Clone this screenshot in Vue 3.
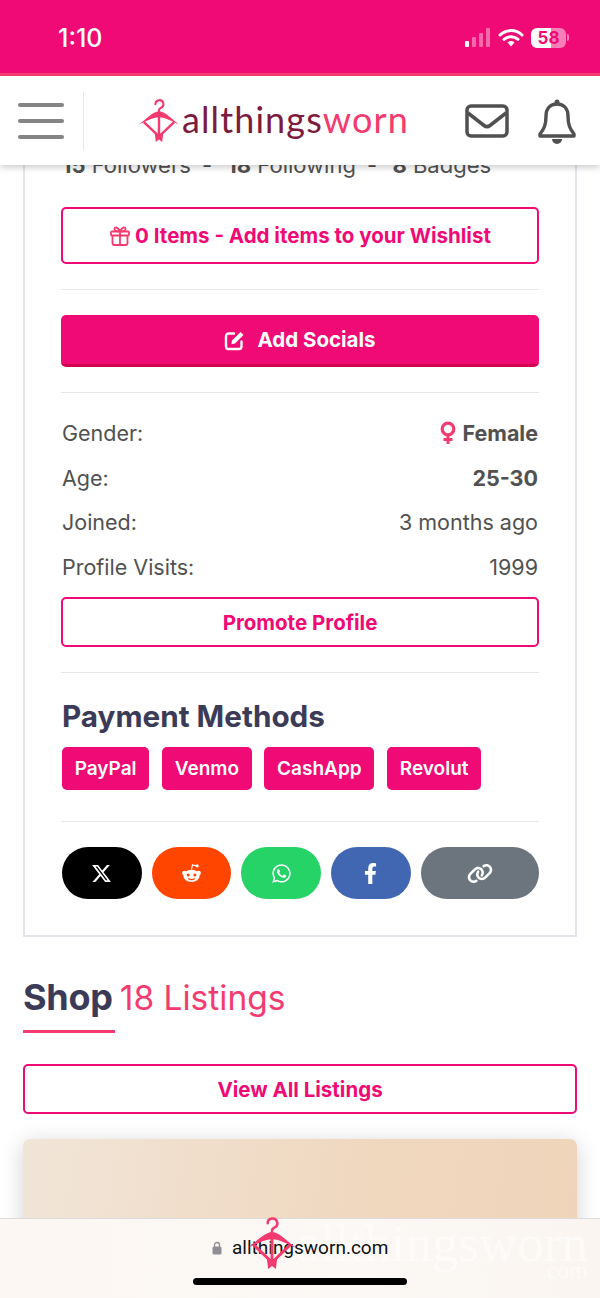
<template>
  <div class="page">
    <svg class="defs" width="0" height="0">
      <symbol id="hanger" viewBox="0 0 50 54">
        <path d="M20.500 6.500a5 5 0 1 1 7 4.500c-1.800.8-2.500 2-2.500 3.500V18" fill="none" stroke="currentColor" stroke-width="2.600" stroke-linecap="round" />
        <path d="M0 32C8 26 17 16 25 15.500 33 16 42 26 50 32 41 28 33 23 25 23 17 23 9 28 0 32z" fill="currentColor" />
        <path d="M6 29l19 18 19-18M25 18v28" fill="none" stroke="currentColor" stroke-width="3" />
        <path d="M19.500 42l5.500 4 5.500-4-1.500 12-4-3-4 3z" fill="currentColor" />
      </symbol>
    </svg>

    <header class="top">
      <div class="status">
        <span class="time">1:10</span>
        <div class="status-icons">
          <div class="signal">
            <i class="on"></i><i></i><i></i><i></i>
          </div>
          <svg class="wifi" viewBox="0 0 26 19" width="26" height="19">
            <path d="M2 7a16 16 0 0 1 22 0M6 11.300a10.500 10.500 0 0 1 14 0" fill="none" stroke="#fff" stroke-width="3" stroke-linecap="round" />
            <path d="M9.500 14.500a5 5 0 0 1 7 0L13 18.500z" fill="#fff" />
          </svg>
          <div class="battery"><span>58</span></div>
          <i class="battery-tip"></i>
        </div>
      </div>
      <nav class="nav">
        <div class="burger"><i></i><i></i><i></i></div>
        <div class="nav-divider"></div>
        <div class="logo">
          <svg class="logo-mark" width="40" height="43"><use href="#hanger" /></svg>
          <span class="logo-text"><span class="dark">allthings</span>worn</span>
        </div>
        <div class="nav-icons">
          <svg viewBox="0 0 44 34" width="44" height="34">
            <rect x="2" y="2" width="40" height="30" rx="4" fill="none" stroke="#505050" stroke-width="3.500" />
            <path d="M3 9l16 12.500c2 1.500 4 1.500 6 0L41 9" fill="none" stroke="#505050" stroke-width="3.500" />
          </svg>
          <svg viewBox="0 0 38 46" width="38" height="46">
            <path d="M19 6c-7 0-11 5-11 12 0 9-2 13-6 18v2h34v-2c-4-5-6-9-6-18 0-7-4-12-11-12z" fill="none" stroke="#505050" stroke-width="3.400" stroke-linejoin="round" />
            <circle cx="19" cy="4" r="2.500" fill="#505050" />
            <path d="M14 41h10a5 5 0 0 1-10 0z" fill="#505050" />
          </svg>
        </div>
      </nav>
    </header>

    <main class="main">
      <section class="card">
        <p class="stats">
          <b>15</b> Followers <span class="dash">-</span> <b>18</b> Following <span class="dash">-</span> <b>8</b> Badges
        </p>

        <button class="btn outline wish">
          <svg viewBox="0 0 22 22" width="22" height="22" fill="none" stroke="#f43a6e" stroke-width="1.800">
            <rect x="2" y="6.500" width="18" height="4" rx="1" />
            <path d="M3.500 10.500V18a2 2 0 0 0 2 2h11a2 2 0 0 0 2-2v-7.500M11 6.500V20M11 6.500C9 2 6 1.500 5.500 3.500S8 6.500 11 6.500zM11 6.500c2-4.500 5-5 5.500-3S14 6.500 11 6.500z" />
          </svg>
          0 Items - Add items to your Wishlist
        </button>
        <hr />
        <button class="btn solid">
          <svg viewBox="0 0 22 22" width="22" height="22">
            <path d="M17.500 12.500V17.500a2.500 2.500 0 0 1-2.500 2.500H4.500A2.500 2.500 0 0 1 2 17.500V7A2.500 2.500 0 0 1 4.500 4.500H10" fill="none" stroke="#fff" stroke-width="2.400" stroke-linecap="round" />
            <path d="M8 11.500L16.500 3l3 3-8.500 8.500-3.700.700z" fill="#fff" />
          </svg>
          Add Socials
        </button>
        <hr />

        <div class="facts">
          <div class="fact">
            <span>Gender:</span>
            <strong class="gender">
              <svg viewBox="0 0 16 24" width="16" height="24">
                <circle cx="8" cy="8" r="5.800" fill="none" stroke="#f43a6e" stroke-width="3.200" />
                <path d="M8 14v9M3.500 18.500h9" stroke="#f43a6e" stroke-width="3" fill="none" />
              </svg>
              Female
            </strong>
          </div>
          <div class="fact"><span>Age:</span><strong>25-30</strong></div>
          <div class="fact"><span>Joined:</span><span>3 months ago</span></div>
          <div class="fact"><span>Profile Visits:</span><span>1999</span></div>
        </div>

        <button class="btn outline promote">Promote Profile</button>
        <hr />

        <h2 class="pay-title">Payment Methods</h2>
        <div class="tags">
          <span v-for="m in methods" :key="m" class="tag">{{ m }}</span>
        </div>
        <hr class="tags-line" />

        <div class="share">
          <a class="x">
            <svg viewBox="0 0 512 512" width="21" height="21">
              <path fill="#fff" d="M389.2 48h70.600L305.600 224.200 487 464H345L233.700 318.600 106.500 464H35.800L200.700 275.500 26.800 48H172.400L272.900 180.900 389.200 48zM364.400 421.800h39.100L151.100 88h-42L364.400 421.800z" />
            </svg>
          </a>
          <a class="reddit">
            <svg viewBox="0 0 22 22" width="21" height="21">
              <circle cx="3.500" cy="10.500" r="2.300" fill="#fff" />
              <circle cx="18.500" cy="10.500" r="2.300" fill="#fff" />
              <ellipse cx="11" cy="13.500" rx="8.500" ry="6.500" fill="#fff" />
              <path d="M11 7l1-5 4 1" fill="none" stroke="#fff" stroke-width="1.200" />
              <circle cx="17" cy="3" r="1.600" fill="#fff" />
              <circle cx="7.500" cy="12.500" r="1.600" fill="#ff4500" />
              <circle cx="14.500" cy="12.500" r="1.600" fill="#ff4500" />
              <path d="M7.500 16.200c2 1.400 5 1.400 7 0" fill="none" stroke="#ff4500" stroke-width="1.200" />
            </svg>
          </a>
          <a class="whatsapp">
            <svg viewBox="0 0 448 512" width="19" height="21">
              <path fill="#fff" d="M380.900 97.100C339 55.100 283.200 32 223.900 32c-122.400 0-222 99.600-222 222 0 39.100 10.200 77.300 29.600 111L0 480l117.700-30.900c32.400 17.700 68.900 27 106.100 27h.1c122.300 0 224.100-99.600 224.100-222 0-59.300-25.200-115-67.100-157zm-157 341.600c-33.200 0-65.700-8.900-94-25.700l-6.700-4-69.800 18.300L72 359.200l-4.400-7c-18.500-29.400-28.200-63.300-28.200-98.200 0-101.700 82.800-184.500 184.600-184.500 49.300 0 95.600 19.200 130.400 54.100 34.800 34.900 56.200 81.200 56.100 130.500 0 101.800-84.900 184.600-186.600 184.600zm101.200-138.200c-5.500-2.800-32.800-16.200-37.900-18-5.100-1.900-8.800-2.800-12.500 2.800-3.700 5.600-14.300 18-17.600 21.800-3.200 3.700-6.500 4.200-12 1.400-32.600-16.300-54-29.100-75.500-66-5.700-9.800 5.700-9.100 16.300-30.300 1.800-3.700.9-6.900-.5-9.700-1.400-2.800-12.500-30.100-17.100-41.200-4.500-10.800-9.100-9.300-12.500-9.500-3.200-.2-6.900-.2-10.600-.2-3.700 0-9.700 1.400-14.800 6.900-5.100 5.600-19.400 19-19.400 46.300 0 27.300 19.900 53.700 22.600 57.400 2.800 3.700 39.100 59.700 94.800 83.800 35.200 15.200 49 16.500 66.600 13.900 10.700-1.600 32.800-13.400 37.400-26.400 4.600-13 4.600-24.100 3.200-26.400-1.300-2.500-5-3.900-10.500-6.600z" />
            </svg>
          </a>
          <a class="facebook">
            <svg viewBox="0 0 320 512" width="13" height="21">
              <path fill="#fff" d="M279.140 288l14.220-92.660h-88.910v-60.130c0-25.350 12.420-50.060 52.240-50.060h40.420V6.260S260.430 0 225.360 0c-73.220 0-121.080 44.380-121.080 124.720v70.620H22.890V288h81.390v224h100.170V288z" />
            </svg>
          </a>
          <a class="copy">
            <svg viewBox="0 0 640 512" width="26" height="21">
              <path fill="#fff" d="M579.800 267.700c56.500-56.500 56.500-148 0-204.500c-50-50-128.800-56.500-186.300-15.400l-1.600 1.100c-14.400 10.300-17.700 30.300-7.400 44.600s30.300 17.700 44.600 7.400l1.600-1.100c32.100-22.900 76-19.300 103.800 8.600c31.500 31.500 31.500 82.500 0 114L422.300 334.800c-31.500 31.500-82.500 31.500-114 0c-27.900-27.900-31.500-71.800-8.600-103.800l1.100-1.600c10.300-14.400 6.900-34.400-7.400-44.600s-34.400-6.900-44.600 7.400l-1.100 1.600C206.500 251.200 213 330 263 380c56.500 56.500 148 56.500 204.500 0L579.800 267.700zM60.200 244.300c-56.500 56.500-56.500 148 0 204.500c50 50 128.800 56.500 186.300 15.400l1.600-1.100c14.400-10.300 17.700-30.300 7.400-44.600s-30.300-17.700-44.600-7.400l-1.600 1.100c-32.100 22.900-76 19.300-103.800-8.600C74 372 74 321 105.500 289.500L217.700 177.200c31.500-31.500 82.500-31.500 114 0c27.900 27.900 31.500 71.800 8.600 103.900l-1.100 1.600c-10.300 14.400-6.900 34.400 7.400 44.600s34.400 6.900 44.600-7.400l1.100-1.600C433.500 260.800 427 182 377 132c-56.500-56.500-148-56.500-204.500 0L60.200 244.300z" />
            </svg>
          </a>
        </div>
      </section>

      <section class="shop">
        <h2 class="shop-title">Shop <span>18 Listings</span></h2>
        <div class="shop-rule"></div>
        <button class="btn outline all">View All Listings</button>
        <div class="listing"></div>
      </section>
    </main>

    <footer class="browser">
      <span class="ghost">allthingsworn<small>.com</small></span>
      <div class="url">
        <svg viewBox="0 0 10 14" width="10" height="14">
          <path d="M2.500 6V4a2.500 2.500 0 0 1 5 0v2" fill="none" stroke="#8e8e93" stroke-width="1.300" />
          <rect x="0.500" y="5.500" width="9" height="8" rx="1.500" fill="#8e8e93" />
        </svg>
        <span>allthingsworn.com</span>
      </div>
      <svg class="float-mark" width="48" height="52"><use href="#hanger" /></svg>
      <div class="home"></div>
    </footer>
  </div>
</template>

<script setup>
const methods = ['PayPal', 'Venmo', 'CashApp', 'Revolut']
</script>

<style>
html,
body {
  margin: 0;
  background: #fff;
}
</style>

<style scoped>
.page {
  position: relative;
  width: 600px;
  height: 1298px;
  overflow: hidden;
  background: #fff;
  font-family: Inter, "Liberation Sans", sans-serif;
  color: #515151;
}

.defs {
  position: absolute;
}

/* header sits over the scrolled page */
.top {
  position: absolute;
  top: 0;
  left: 0;
  right: 0;
  z-index: 5;
  box-shadow: 0 2px 7px rgba(0, 0, 0, 0.22);
}

.status {
  height: 73px;
  background: #f00a75;
  border-bottom: 3px solid #f43a6e;
  display: flex;
  align-items: center;
  justify-content: space-between;
  padding: 0 31px 0 58px;
}

.time {
  color: #fff;
  font-size: 25px;
  font-weight: 500;
  position: relative;
  top: 1px;
}

.status-icons {
  display: flex;
  align-items: center;
  gap: 7px;
  position: relative;
  top: 1px;
}

.signal {
  display: flex;
  align-items: flex-end;
  gap: 3px;
  height: 19px;
  margin-right: 1px;
}

.signal i {
  width: 4px;
  background: #f769ab;
  border-radius: 1px;
}

.signal i:nth-child(1) {
  height: 6px;
  background: #fff;
}

.signal i:nth-child(2) {
  height: 10px;
}

.signal i:nth-child(3) {
  height: 14px;
}

.signal i:nth-child(4) {
  height: 19px;
}

.battery {
  width: 35px;
  height: 20px;
  border-radius: 6px;
  background: linear-gradient(90deg, #fff 58%, #f87fb8 58%);
  color: #f00a75;
  font-size: 17px;
  font-weight: 700;
  line-height: 20px;
  text-align: center;
}

.battery-tip {
  width: 2px;
  height: 7px;
  background: #f87fb8;
  border-radius: 0 2px 2px 0;
  margin-left: -6px;
}

.nav {
  height: 89px;
  background: #fff;
  display: flex;
  align-items: center;
  padding: 0 24px 0 18px;
}

.burger {
  width: 46px;
  height: 36px;
  display: flex;
  flex-direction: column;
  justify-content: space-between;
  flex: none;
}

.burger i {
  height: 4px;
  border-radius: 2px;
  background: #858585;
}

.nav-divider {
  width: 1px;
  height: 58px;
  margin-left: 19px;
  background: #e6e6e6;
  flex: none;
}

.logo {
  display: flex;
  align-items: center;
  margin-left: 55px;
  gap: 3px;
}

.logo-mark {
  color: #f43a6e;
  flex: none;
}

.logo-text {
  font-family: Lato, sans-serif;
  font-size: 36px;
  font-weight: 400;
  letter-spacing: 1.1px;
  color: #f43a6e;
  line-height: 40px;
  position: relative;
  top: -2px;
}

.dark {
  color: #7d1b3e;
}

.nav-icons {
  margin-left: auto;
  display: flex;
  align-items: center;
  gap: 29px;
}

.main {
  padding-top: 152px;
}

.card {
  margin: 0 23px;
  padding: 0 36px 36px;
  border: 2px solid #e4e4ea;
  border-top: 0;
}

.stats {
  margin: -2px 0 0 1px;
  font-size: 22px;
  line-height: 30px;
  white-space: nowrap;
}

.stats b {
  font-weight: 700;
}

.dash {
  margin: 0 9px 0 5px;
}

.btn {
  display: flex;
  align-items: center;
  justify-content: center;
  width: 100%;
  box-sizing: border-box;
  font-family: inherit;
  font-size: 20.500px;
  font-weight: 700;
  border-radius: 5px;
  padding: 0;
}

.outline {
  height: 50px;
  background: #fff;
  color: #f00a75;
  border: 2px solid #f00a75;
}

.wish {
  height: 57px;
  margin-top: 27px;
  gap: 4px;
}

.solid {
  height: 52px;
  background: #f00a75;
  color: #fff;
  border: 0;
  border-bottom: 3px solid #d2004f;
  gap: 11px;
}

hr {
  border: 0;
  height: 1px;
  background: #e8e8ec;
  margin: 25px 0;
}

.facts {
  margin-top: -7px;
  padding: 0 1px;
}

.fact {
  height: 44.500px;
  display: flex;
  align-items: center;
  justify-content: space-between;
  font-size: 21.500px;
}

.fact strong {
  font-weight: 700;
}

.gender {
  display: flex;
  align-items: center;
  gap: 6px;
}

.promote {
  margin-top: 8px;
}

.pay-title {
  margin: 0 0 0 1px;
  font-size: 29.700px;
  line-height: 36px;
  font-weight: 700;
  color: #3b3b58;
}

.tags {
  display: flex;
  gap: 12.750px;
  margin: 13px 0 0 1px;
}

.tag {
  height: 43px;
  line-height: 43px;
  padding: 0 12.700px;
  border-radius: 5px;
  background: #f00a75;
  color: #fff;
  font-size: 19px;
  font-weight: 600;
}

.tags-line {
  margin-top: 31px;
}

.share {
  display: flex;
  gap: 10px;
  padding-left: 1px;
}

.share a {
  flex: 80 0 0;
  height: 52px;
  border-radius: 26px;
  display: flex;
  align-items: center;
  justify-content: center;
}

.share .copy {
  flex-grow: 119;
}

.x {
  background: #000;
}

.reddit {
  background: #ff4500;
}

.whatsapp {
  background: #25d366;
}

.facebook {
  background: #4267b2;
}

.copy {
  background: #6c757d;
}

.shop {
  margin: 35px 23px 0;
}

.shop-title {
  margin: 0;
  font-size: 36px;
  line-height: 50px;
  font-weight: 700;
  letter-spacing: -0.3px;
  color: #3b3b58;
}

.shop-title span {
  font-weight: 400;
  font-size: 33.500px;
  letter-spacing: 0;
  color: #f43a6e;
  margin-left: -1px;
}

.shop-rule {
  width: 92px;
  height: 3px;
  margin-top: 7px;
  background: #f43a6e;
}

.all {
  margin-top: 31px;
}

.listing {
  height: 300px;
  margin-top: 25px;
  border-radius: 7px;
  background: linear-gradient(100deg, #f1e5d8 0%, #f0d8c0 55%, #efd4b8 100%);
  box-shadow: 0 4px 22px rgba(0, 0, 0, 0.18);
}

/* Safari toolbar stays over the page */
.browser {
  position: absolute;
  left: 0;
  right: 0;
  bottom: 0;
  height: 79px;
  z-index: 6;
  background: linear-gradient(90deg, #fcf7f3, #fbf8f5 60%, #faf5f1);
  border-top: 1px solid #dcdcdc;
}

.url {
  position: absolute;
  top: 18px;
  left: 212px;
  display: flex;
  align-items: center;
  gap: 10px;
  color: #111;
  font-family: Roboto, sans-serif;
  font-size: 19px;
  line-height: 22px;
}

.ghost {
  position: absolute;
  right: 12px;
  top: -2px;
  font-family: "Liberation Serif", serif;
  font-size: 53px;
  line-height: 52px;
  color: rgba(255, 255, 255, 0.6);
  text-align: right;
}

.ghost small {
  display: block;
  font-size: 24px;
  line-height: 20px;
  margin-top: -9px;
}

.float-mark {
  position: absolute;
  left: 248px;
  top: -2px;
  color: #f43a6e;
}

.home {
  position: absolute;
  left: 193px;
  bottom: 13px;
  width: 214px;
  height: 7px;
  border-radius: 4px;
  background: #000;
}
</style>
